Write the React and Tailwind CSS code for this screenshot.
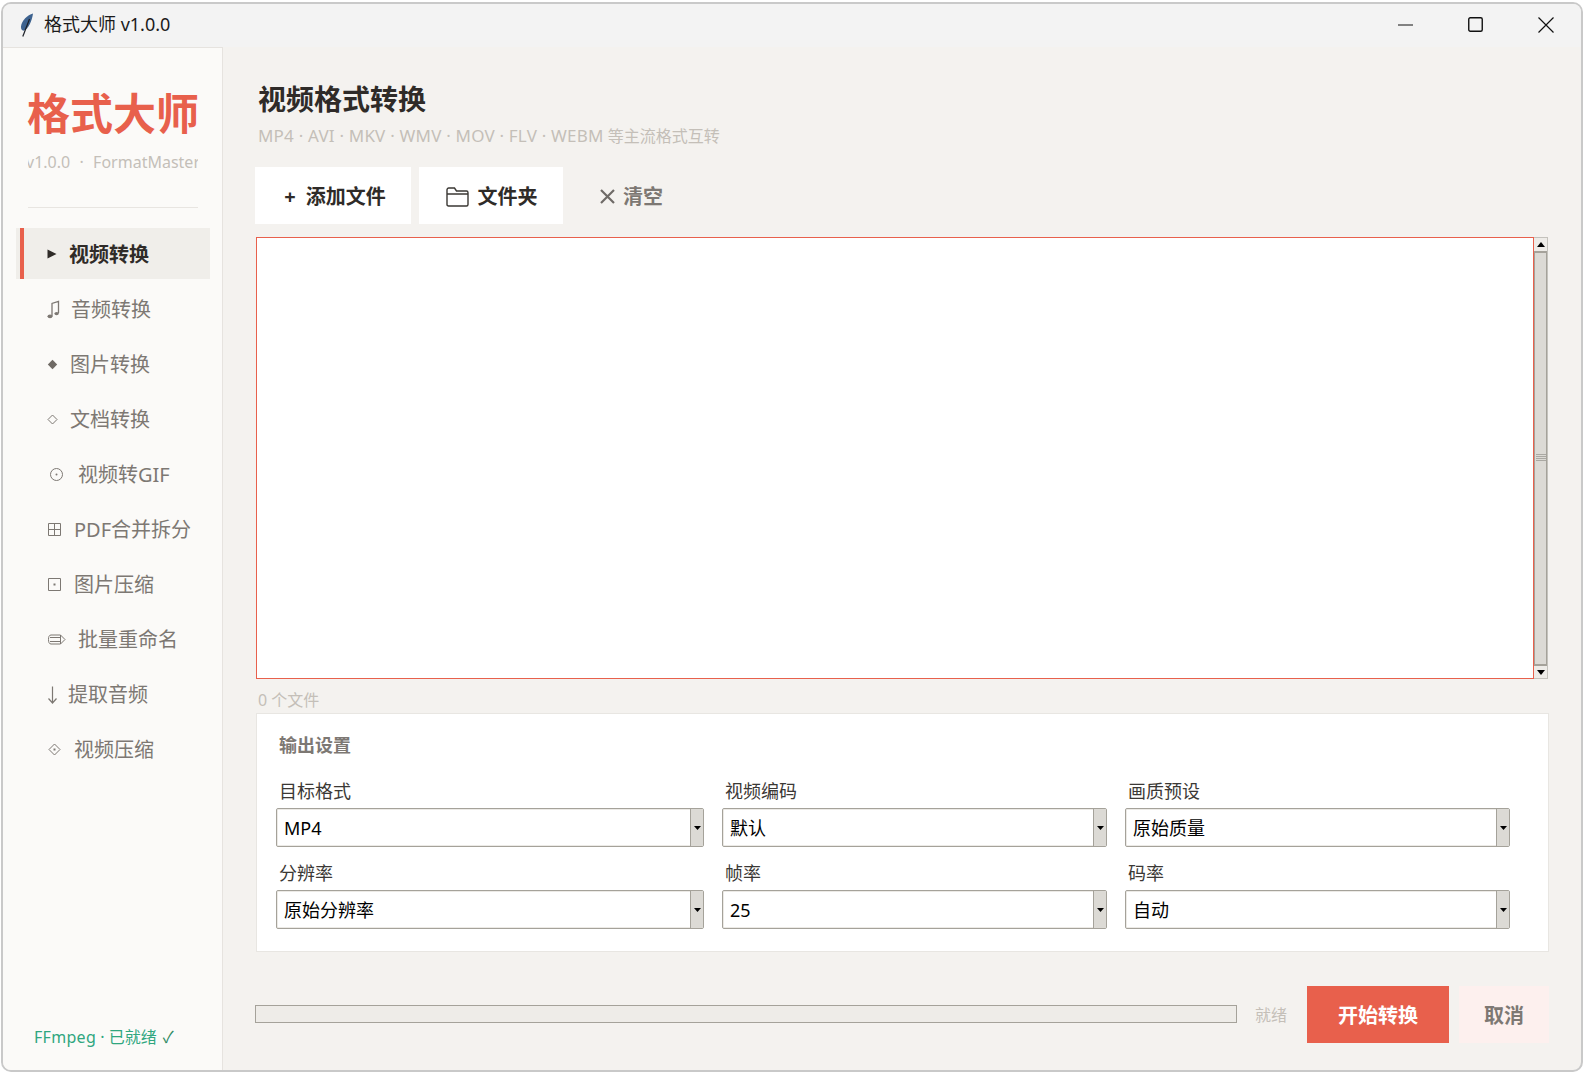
import React from 'react';

const Play = () => (
  <svg width="10" height="10" viewBox="0 0 10 10"><path d="M0.5 0.5L9.5 5L0.5 9.5Z" fill="#2f2b28" /></svg>
);
const Music = () => (
  <svg width="13" height="19" viewBox="0 0 13 19" fill="none" stroke="#7d7873">
    <path d="M5 16V3.5L11.5 1.5V13" strokeWidth="1.3" />
    <ellipse cx="3" cy="16.3" rx="2.5" ry="1.9" fill="#7d7873" stroke="none" />
    <ellipse cx="9.6" cy="13.6" rx="2.2" ry="1.6" fill="#7d7873" stroke="none" />
  </svg>
);
const Solid = () => (
  <svg width="11" height="11" viewBox="0 0 11 11"><path d="M5.5 0.8L10.2 5.5L5.5 10.2L0.8 5.5Z" fill="#6f6a65" /></svg>
);
const Hollow = () => (
  <svg width="11" height="11" viewBox="0 0 11 11" fill="none"><path d="M5.5 1L10 5.5L5.5 10L1 5.5Z" stroke="#7d7873" /></svg>
);
const Dot = () => (
  <svg width="15" height="15" viewBox="0 0 15 15" fill="none">
    <circle cx="7.5" cy="7.5" r="6" stroke="#7d7873" /><circle cx="7.5" cy="7.5" r="1" fill="#7d7873" />
  </svg>
);
const Grid = () => (
  <svg width="13" height="13" viewBox="0 0 13 13" fill="none" stroke="#7d7873">
    <path d="M0.5 0.5H12.5V12.5H0.5ZM6.5 0.5V12.5M0.5 6.5H12.5" />
  </svg>
);
const Square = () => (
  <svg width="13" height="13" viewBox="0 0 13 13" fill="none">
    <path d="M0.5 0.5H12.5V12.5H0.5Z" stroke="#7d7873" /><rect x="5.5" y="5.5" width="2" height="2" fill="#7d7873" />
  </svg>
);
const Pencil = () => (
  <svg width="18" height="11" viewBox="0 0 18 11" fill="none" stroke="#7d7873">
    <path d="M3 1H12.5L17 5.5L12.5 10H3C1 10 0.5 8 0.5 5.5C0.5 3 1 1 3 1Z" />
    <path d="M2 3.5H12.5M2 7.5H12.5M12.5 1V10" />
  </svg>
);
const Down = () => (
  <svg width="11" height="18" viewBox="0 0 11 18" fill="none" stroke="#7d7873" strokeWidth="1.2">
    <path d="M5.5 0.5V17M1.5 12.5L5.5 17L9.5 12.5" />
  </svg>
);
const DiamondDot = () => (
  <svg width="13" height="13" viewBox="0 0 13 13" fill="none">
    <path d="M6.5 1L12 6.5L6.5 12L1 6.5Z" stroke="#7d7873" /><rect x="5.5" y="5.5" width="2" height="2" fill="#7d7873" />
  </svg>
);

const navItems = [
  { label: '视频转换', icon: <Play />, box: 'w-[22px]', active: true },
  { label: '音频转换', icon: <Music />, box: 'w-[24px] -ml-px pt-[2px]' },
  { label: '图片转换', icon: <Solid />, box: 'w-[23px] pt-[2px]' },
  { label: '文档转换', icon: <Hollow />, box: 'w-[23px] pt-[2px]' },
  { label: '视频转GIF', icon: <Dot />, box: 'w-[31px] pl-[2px] pt-[2px]' },
  { label: 'PDF合并拆分', icon: <Grid />, box: 'w-[27px] pl-px pt-[2px]' },
  { label: '图片压缩', icon: <Square />, box: 'w-[27px] pl-px pt-[2px]' },
  { label: '批量重命名', icon: <Pencil />, box: 'w-[31px] pl-px pt-[2px]' },
  { label: '提取音频', icon: <Down />, box: 'w-[21px] -ml-px pt-[2px]' },
  { label: '视频压缩', icon: <DiamondDot />, box: 'w-[27px] pl-px pt-[2px]' },
];

const Combo = ({ value, label }) => (
  <div className="flex flex-col gap-[5px]">
    <div className="h-6 pl-[3px] text-[18px] leading-6 text-[#3b3835]">{label}</div>
    <div className="flex h-[39px] rounded-[2px] border border-[#a5a29a] bg-white shadow-[inset_0_0_0_1px_#eceae6]">
      <div className="flex-1 pl-[7px] text-[18px] leading-[38px] text-black">{value}</div>
      <div className="flex w-[13px] items-center justify-center border-l border-[#a5a29a] bg-[#dcdad5]">
        <svg width="7" height="4" viewBox="0 0 7 4"><path d="M0 0H7L3.5 4Z" fill="#000" /></svg>
      </div>
    </div>
  </div>
);

const App = () => {
  return (
    <div className="h-[1074px] w-[1584px] overflow-hidden bg-white pt-[2px] pb-[2px] pl-px pr-px font-['Noto_Sans','Noto_Sans_CJK_SC',sans-serif]">
      <div className="flex h-full flex-col overflow-hidden rounded-[10px] border-2 border-[#c9c9c9] bg-[#f4f2ef]">
        {/* title bar */}
        <div className="flex h-[43px] shrink-0 items-center bg-[#f3f3f3] pb-[2px]">
          <svg className="ml-[17px]" width="14" height="24" viewBox="0 0 14 24">
            <path d="M13 0.5C7.5 2 1.5 7.5 1 13.5C0.8 16 1.8 17.5 3.5 17.8C8.5 16 12 8 13 0.5Z" fill="#3d628f" />
            <path d="M9.5 6L2.8 23.5" stroke="#1c1f26" strokeWidth="1.2" fill="none" />
          </svg>
          <div className="ml-[10px] flex-1 text-[18px] text-[#1b1b1b]">格式大师 v1.0.0</div>
          <div className="flex h-6 w-[68px] items-center justify-center">
            <svg width="15" height="2" viewBox="0 0 15 2"><path d="M0 1H15" stroke="#111" /></svg>
          </div>
          <div className="flex h-6 w-[72px] items-center justify-center">
            <svg width="15" height="15" viewBox="0 0 15 15" fill="none"><rect x="0.75" y="0.75" width="13.5" height="13.5" rx="1.5" stroke="#111" strokeWidth="1.4" /></svg>
          </div>
          <div className="flex h-6 w-[70px] items-center justify-center">
            <svg width="16" height="16" viewBox="0 0 16 16" fill="none"><path d="M0.5 0.5L15.5 15.5M15.5 0.5L0.5 15.5" stroke="#111" strokeWidth="1.2" /></svg>
          </div>
        </div>

        <div className="flex flex-1">
          {/* sidebar */}
          <div className="flex w-[220px] shrink-0 flex-col border-t border-r border-[#e6e3df] bg-[#fbfaf8]">
            <div className="ml-[24px] mt-[38px] flex h-[56px] w-[172px] justify-center whitespace-nowrap text-[43px] font-bold leading-[56px] text-[#e8604c]">格式大师</div>
            <div className="ml-[25px] mt-[8px] flex h-[24px] w-[170px] justify-center overflow-hidden whitespace-pre text-[16px] leading-[24px] text-[#c4bfb8] [word-spacing:0.5px]">v1.0.0  ·  FormatMaster</div>
            <div className="ml-[25px] mt-[33px] h-px w-[170px] bg-[#e8e5e1]" />
            <div className="ml-[13px] mt-[20px] flex w-[194px] flex-col gap-1">
              {navItems.map((item) => (
                <div
                  key={item.label}
                  className={item.active
                    ? 'flex h-[51px] items-center bg-[#f0eeea] pl-[4px] text-[20px] font-bold text-[#2f2b28]'
                    : 'flex h-[51px] items-center pl-[4px] text-[20px] text-[#7d7873]'}
                >
                  <div className={item.active ? 'h-full w-1 bg-[#e8604c]' : 'h-full w-1'} />
                  <div className={`ml-[23px] flex shrink-0 items-center ${item.box}`}>{item.icon}</div>
                  <span className="pt-[2px]">{item.label}</span>
                </div>
              ))}
            </div>
            <div className="ml-[31px] mt-auto mb-[21px] text-[16px] leading-6 text-[#2fa67f]">
              <span className="tracking-[0.3px]">FFmpeg</span> · 已就绪<span className="ml-[6px] text-[#2e8b63]">✓</span>
            </div>
          </div>

          {/* main */}
          <div className="flex flex-1 flex-col pl-[32px] pt-[32px] pr-[32px]">
            <div className="h-10 pl-[3px] text-[28px] font-bold leading-10 text-[#2f2b28]">视频格式转换</div>
            <div className="mt-[5px] h-6 pl-[3px] text-[16px] leading-6 text-[#c4bfb8]">
              <span className="text-[17px] tracking-[0.2px]">MP4 · AVI · MKV · WMV · MOV · FLV · WEBM</span> 等主流格式互转
            </div>
            <div className="mt-[19px] flex h-[57px] gap-2">
              <div className="flex w-[156px] items-center justify-center gap-[10px] bg-white pl-[4px] pt-[2px] text-[20px] font-bold text-[#2f2b28]">
                <span className="text-[20px]">+</span>
                <span>添加文件</span>
              </div>
              <div className="flex w-[144px] items-center justify-center gap-[9px] bg-white pl-px pt-[2px] text-[20px] font-bold text-[#2f2b28]">
                <svg width="23" height="20" viewBox="0 0 23 20" fill="none" stroke="#3a3733" strokeWidth="1.4">
                  <path d="M1 3C1 2 1.7 1 2.7 1H8.5L10.5 4H20.5C21.5 4 22 4.8 22 5.7V17.5C22 18.4 21.4 19 20.5 19H2.5C1.6 19 1 18.4 1 17.5Z" />
                  <path d="M1 7H22" />
                </svg>
                <span>文件夹</span>
              </div>
              <div className="ml-[29px] flex items-center gap-[8px] pt-[2px] text-[20px] font-bold text-[#7d7873]">
                <svg width="15" height="15" viewBox="0 0 15 15" fill="none"><path d="M1 1L14 14M14 1L1 14" stroke="#6f6b67" strokeWidth="2.2" /></svg>
                <span>清空</span>
              </div>
            </div>

            {/* file list */}
            <div className="ml-px mr-px mt-[13px] flex h-[442px]">
              <div className="flex-1 border border-[#e8604c] bg-white" />
              <div className="flex w-[14px] flex-col border border-l-0 border-[#c4c2bc] bg-[#dcdad5]">
                <div className="flex h-[13px] items-center justify-center bg-[#eeece8]">
                  <svg width="8" height="5" viewBox="0 0 8 5"><path d="M0 5H8L4 0Z" fill="#000" /></svg>
                </div>
                <div className="flex flex-1 flex-col items-center justify-center border-x border-y-2 border-[#a5a29a] pb-[2px]">
                  <div className="flex w-[10px] flex-col gap-[1px]">
                    <div className="h-px bg-[#aaa8a2]" />
                    <div className="h-px bg-[#aaa8a2]" />
                    <div className="h-px bg-[#aaa8a2]" />
                    <div className="h-px bg-[#aaa8a2]" />
                  </div>
                </div>
                <div className="flex h-[12px] items-center justify-center bg-[#eeece8]">
                  <svg width="8" height="5" viewBox="0 0 8 5"><path d="M0 0H8L4 5Z" fill="#000" /></svg>
                </div>
              </div>
            </div>
            <div className="mt-[9px] h-6 pl-[3px] text-[16px] leading-6 text-[#c4bfb8]">0 个文件</div>

            {/* output settings */}
            <div className="ml-px mt-px h-[239px] border border-[#e8e6e2] bg-white pl-[19px] pt-[19px]">
              <div className="h-6 pl-[3px] text-[18px] font-bold leading-6 text-[#7d7873]">输出设置</div>
              <div className="mt-[22px] grid grid-cols-[428px_385px_385px] gap-x-[18px] gap-y-[14px]">
                <Combo label="目标格式" value="MP4" />
                <Combo label="视频编码" value="默认" />
                <Combo label="画质预设" value="原始质量" />
                <Combo label="分辨率" value="原始分辨率" />
                <Combo label="帧率" value="25" />
                <Combo label="码率" value="自动" />
              </div>
            </div>

            {/* bottom bar */}
            <div className="mt-[34px] flex h-[57px] items-center">
              <div className="-mt-[2px] h-[18px] w-[982px] border border-[#a5a29a] bg-[#eeece8]" />
              <div className="ml-[18px] w-[33px] whitespace-nowrap text-[16px] text-[#c4bfb8]">就绪</div>
              <div className="ml-[19px] flex h-full w-[142px] items-center justify-center bg-[#e8604c] pt-[2px] text-[20px] font-bold text-white">开始转换</div>
              <div className="ml-[10px] flex h-full w-[90px] items-center justify-center bg-[#fdf0ee] pt-[2px] text-[20px] font-bold text-[#7d7873]">取消</div>
            </div>
          </div>
        </div>
      </div>
    </div>
  );
};

export default App;
